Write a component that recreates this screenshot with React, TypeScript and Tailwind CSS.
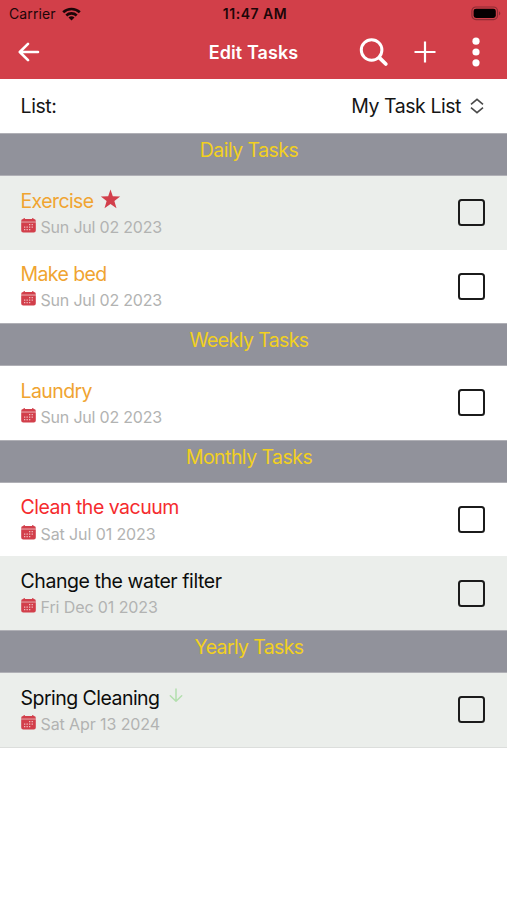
interface Task {
  name: string
  date: string
  color: string
  tracking: string
  dateTracking: string
  shaded?: boolean
  priority?: "high" | "low"
}

interface Section {
  title: string
  tracking: string
  tasks: Task[]
}

const sections: Section[] = [
  {
    title: "Daily Tasks",
    tracking: "tracking-[-0.55px]",
    tasks: [
      { name: "Exercise", date: "Sun Jul 02 2023", color: "text-[#f0a431]", tracking: "tracking-[-0.6px]", dateTracking: "tracking-[-0.2px]", shaded: true, priority: "high" },
      { name: "Make bed", date: "Sun Jul 02 2023", color: "text-[#f0a431]", tracking: "tracking-[-0.6px]", dateTracking: "tracking-[-0.2px]" },
    ],
  },
  {
    title: "Weekly Tasks",
    tracking: "tracking-[-0.6px]",
    tasks: [
      { name: "Laundry", date: "Sun Jul 02 2023", color: "text-[#f0a431]", tracking: "tracking-[-0.6px]", dateTracking: "tracking-[-0.2px]" },
    ],
  },
  {
    title: "Monthly Tasks",
    tracking: "tracking-[-0.55px]",
    tasks: [
      { name: "Clean the vacuum", date: "Sat Jul 01 2023", color: "text-[#f52b2e]", tracking: "tracking-[-0.5px]", dateTracking: "tracking-[-0.1px]" },
      { name: "Change the water filter", date: "Fri Dec 01 2023", color: "text-[#0c0d0c]", tracking: "tracking-[-0.43px]", dateTracking: "tracking-[-0.1px]", shaded: true },
    ],
  },
  {
    title: "Yearly Tasks",
    tracking: "tracking-[-0.65px]",
    tasks: [
      { name: "Spring Cleaning", date: "Sat Apr 13 2024", color: "text-[#0c0d0c]", tracking: "tracking-[-0.53px]", dateTracking: "tracking-[-0.1px]", shaded: true, priority: "low" },
    ],
  },
]

function WifiIcon() {
  return (
    <svg className="ml-[6px] h-[14px] w-[19px]" viewBox="0 0 19 14" fill="none" stroke="#1c0608" strokeWidth="2.6">
      <path d="M1.2 5.3C5.8.8 13.2.8 17.8 5.3" />
      <path d="M4.3 8.5c2.9-2.8 7.5-2.8 10.4 0" />
      <path d="M6.5 10.5c1.7-1.6 4.3-1.6 6 0l-3 3z" fill="#1c0608" stroke="none" />
    </svg>
  )
}

function BatteryIcon() {
  return (
    <svg className="h-[15px] w-[30px]" viewBox="0 0 30 15">
      <rect x="0.9" y="1" width="25.6" height="12.6" rx="4" fill="none" stroke="#8d2c34" strokeWidth="1.2" />
      <rect x="2.6" y="2.7" width="22.2" height="9.2" rx="2.4" fill="#050001" />
      <path d="M28 5.2c1.8.8 1.8 3.4 0 4.2z" fill="#8d2c34" />
    </svg>
  )
}

function CalendarIcon() {
  return (
    <svg className="h-[15px] w-[15px] shrink-0" viewBox="0 0 15 15">
      <path d="M2.6 0h1.2v1h7.4V0h1.2v1h.5A1.9 1.9 0 0 1 14.8 2.9v.9H.2v-.9A1.9 1.9 0 0 1 2.1 1h.5z" fill="#d23f4b" />
      <path d="M.2 3.8h14.6v.8H.2z" fill="#e08a91" />
      <path d="M.2 4.6h14.6v7.8a2 2 0 0 1-2 2H2.2a2 2 0 0 1-2-2z" fill="#d23f4b" />
      <g fill="#f0bcc0">
        <path d="M8 6h1.3v1.3H8zM10.6 6h1.3v1.3h-1.3zM3 8.5h1.3v1.3H3zM5.5 8.5h1.3v1.3H5.5zM8 8.5h1.3v1.3H8zM10.6 8.5h1.3v1.3h-1.3zM3 11h1.3v1.3H3zM5.5 11h1.3v1.3H5.5zM8 11h1.3v1.3H8z" />
      </g>
    </svg>
  )
}

function PriorityIcon({ priority }: { priority: "high" | "low" }) {
  if (priority === "high") {
    return (
      <svg className="mb-[5px] ml-[6px] h-[20px] w-[21px]" viewBox="0 0 20 19" fill="#d23f4b">
        <path d="M10 .5l2.2 6.3 7 .2-5.5 4.3 2 6.9L10 14.2l-5.7 4 2-6.9L.8 7l7-.2z" />
      </svg>
    )
  }

  return (
    <svg className="mb-[6px] ml-[8px] h-[15px] w-[16px]" viewBox="0 0 16 15" fill="none" stroke="#b3dfae" strokeWidth="1.5" strokeLinecap="round" strokeLinejoin="round">
      <path d="M8 1v12M2.3 7.7L8 13.2l5.7-5.5" />
    </svg>
  )
}

function Header() {
  return (
    <header className="h-[79px] bg-[#d23f49]">
      <div className="grid h-[27px] grid-cols-3 items-center pr-[6px] pl-[9px] text-[#1c0608]">
        <div className="flex items-center">
          <span className="text-[14px] tracking-[0.1px]">Carrier</span>
          <WifiIcon />
        </div>
        <span className="text-center text-[14px] font-semibold tracking-[0.5px] whitespace-nowrap">11:47 AM</span>
        <div className="flex justify-end">
          <BatteryIcon />
        </div>
      </div>

      <div className="grid h-[50px] grid-cols-[1fr_auto_1fr] items-center text-white">
        <svg className="ml-[18px] h-[20px] w-[22px]" viewBox="0 0 22 20" fill="none" stroke="currentColor" strokeWidth="2.6" strokeLinecap="round" strokeLinejoin="round">
          <path d="M20 10H2M10 1.8L1.8 10l8.2 8.2" />
        </svg>
        <h1 className="pt-px text-[18px] font-semibold tracking-[0.1px]">Edit Tasks</h1>
        <div className="flex items-center justify-end pr-[27px]">
          <svg className="h-[30px] w-[30px]" viewBox="0 0 30 30" fill="none" stroke="currentColor">
            <circle cx="12.6" cy="13" r="10.3" strokeWidth="3" />
            <path d="M20.3 20.7l6.5 6.3" strokeWidth="3.8" strokeLinecap="round" />
          </svg>
          <svg className="ml-[25px] h-[22px] w-[22px]" viewBox="0 0 22 22" fill="none" stroke="currentColor" strokeWidth="2.2">
            <path d="M11 .5v21M.5 11h21" />
          </svg>
          <svg className="ml-[36px] h-[30px] w-[8px]" viewBox="0 0 8 30" fill="currentColor">
            <circle cx="4" cy="4.2" r="3.6" />
            <circle cx="4" cy="15" r="3.6" />
            <circle cx="4" cy="25.8" r="3.6" />
          </svg>
        </div>
      </div>
    </header>
  )
}

function TaskRow({ task }: { task: Task }) {
  return (
    <li className={`flex h-[73.6px] items-center justify-between pr-[22px] pl-[20.5px] ${task.shaded ? "bg-[#ebeeeb]" : "bg-white"}`}>
      <div className="pt-[2px]">
        <div className="flex h-[26px] items-center">
          <span className={`text-[19.5px] whitespace-nowrap ${task.color} ${task.tracking}`}>{task.name}</span>
          {task.priority && <PriorityIcon priority={task.priority} />}
        </div>
        <div className="flex h-[25px] items-center gap-[5px]">
          <div className="pb-[3px]"><CalendarIcon /></div>
          <span className={`text-[16px] whitespace-nowrap text-[#b2b3b2] ${task.dateTracking}`}>{task.date}</span>
        </div>
      </div>
      <span className="h-[27px] w-[27px] rounded-[3.5px] border-2 border-[#1b1b1b]" />
    </li>
  )
}

export default function App() {
  return (
    <div className="h-[900px] w-[507px] overflow-hidden bg-white font-['Inter',sans-serif]">
      <Header />

      <div className="flex h-[54px] items-center justify-between pt-[2px] pr-[23px] pl-[20.5px] text-[19.5px] text-[#151515]">
        <span className="tracking-[-0.4px]">List:</span>
        <div className="flex items-center gap-[9px]">
          <span className="tracking-[-0.45px]">My Task List</span>
          <svg className="mb-[2px] h-[16px] w-[14px]" viewBox="0 0 14 16" fill="none" stroke="#4a4a4a" strokeWidth="1.6">
            <path d="M1 6.3L7 1.3l6 5M1 9.7l6 5 6-5" />
          </svg>
        </div>
      </div>

      {sections.map((section) => (
        <section key={section.title}>
          <h2 className={`h-[43px] border-y border-[#b0b0b6] bg-[#91929b] pt-[2px] pr-[9px] text-center text-[19.5px] leading-[28px] text-[#f2d01f] ${section.tracking}`}>
            {section.title}
          </h2>
          <ul>
            {section.tasks.map((task) => (
              <TaskRow key={task.name} task={task} />
            ))}
          </ul>
        </section>
      ))}
      <div className="h-px bg-[#dcdedc]" />
    </div>
  )
}
